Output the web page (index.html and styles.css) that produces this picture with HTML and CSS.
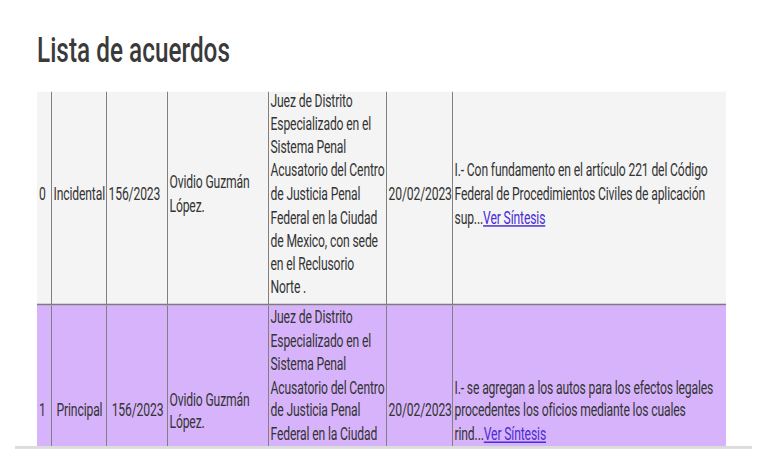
FILE: index.html
```html
<!DOCTYPE html>
<html lang="es">
<head>
<meta charset="utf-8">
<title>Lista de acuerdos</title>
<link rel="stylesheet" href="styles.css">
</head>
<body>
<div class="page">
  <h1 class="title">Lista de acuerdos</h1>
  <div class="frame">
    <div class="viewport">
      <table class="acuerdos">
        <colgroup>
          <col class="c-num"><col class="c-tipo"><col class="c-exp"><col class="c-parte"><col class="c-org"><col class="c-fecha"><col class="c-sint">
        </colgroup>
        <tr class="row-even">
          <td>0</td>
          <td>Incidental</td>
          <td>156/2023</td>
          <td>Ovidio Guzmán<br>López.</td>
          <td>Juez de Distrito<br>Especializado en el<br>Sistema Penal<br>Acusatorio del Centro<br>de Justicia Penal<br>Federal en la Ciudad<br>de Mexico, con sede<br>en el Reclusorio<br>Norte .</td>
          <td>20/02/2023</td>
          <td>I.- Con fundamento en el artículo 221 del Código<br>Federal de Procedimientos Civiles de aplicación<br>sup...<a href="#" class="link">Ver Síntesis</a></td>
        </tr>
        <tr class="row-odd">
          <td>1</td>
          <td class="center">Principal</td>
          <td class="center">156/2023</td>
          <td>Ovidio Guzmán<br>López.</td>
          <td>Juez de Distrito<br>Especializado en el<br>Sistema Penal<br>Acusatorio del Centro<br>de Justicia Penal<br>Federal en la Ciudad<br>de Mexico, con sede<br>en el Reclusorio<br>Norte .</td>
          <td>20/02/2023</td>
          <td>I.- se agregan a los autos para los efectos legales<br>procedentes los oficios mediante los cuales<br>rind...<a href="#" class="link">Ver Síntesis</a></td>
        </tr>
      </table>
    </div>
  </div>
</div>
</body>
</html>
```
FILE: styles.css
```css
html, body {
  margin: 0;
  padding: 0;
  background: #ffffff;
}
body {
  width: 768px;
  height: 462px;
  overflow: hidden;
}
/* The source capture is stretched vertically; the page is laid out
   at its natural width and stretched by the same factor. */
.page {
  display: flow-root;
  width: 768px;
  transform: scaleY(1.4815);
  transform-origin: left top;
  font-family: Roboto, "Liberation Sans", sans-serif;
  color: #333333;
}
.title {
  margin: 22.3px 0 0 37px;
  font-size: 24.3px;
  line-height: 24.3px;
  font-weight: 500;
  color: #3a3a3a;
  letter-spacing: 0.03px;
}
.frame {
  margin: 15.5px 16px 0 15px;
  border-bottom: 2px solid #dcdcdc;
}
.viewport {
  margin-left: 22px;
  width: 689px;
  height: 239px;
  overflow: hidden;
}
.acuerdos {
  margin-top: -2.7px;
  border-collapse: collapse;
  table-layout: fixed;
  width: 689px;
  font-size: 12.15px;
  line-height: 15.8px;
  letter-spacing: -0.135px;
  color: #333333;
}
.c-num { width: 14px; }
.c-tipo { width: 55px; }
.c-exp { width: 61px; }
.c-parte { width: 101px; }
.c-org { width: 118px; }
.c-fecha { width: 66px; }
.c-sint { width: 274px; }
.acuerdos td {
  padding: 1.35px 0 2px 2px;
  vertical-align: middle;
  white-space: nowrap;
  overflow: hidden;
  border-left: 1px solid #808080;
}
.acuerdos td:first-child {
  border-left: none;
}
.row-even {
  background: #f4f4f4;
  border-bottom: 1.35px solid #7c7c7c;
}
.row-odd {
  background: #d7b3fb;
}
.center {
  text-align: center;
}
.link {
  color: #4b2bd6;
  text-decoration: underline;
}
```
